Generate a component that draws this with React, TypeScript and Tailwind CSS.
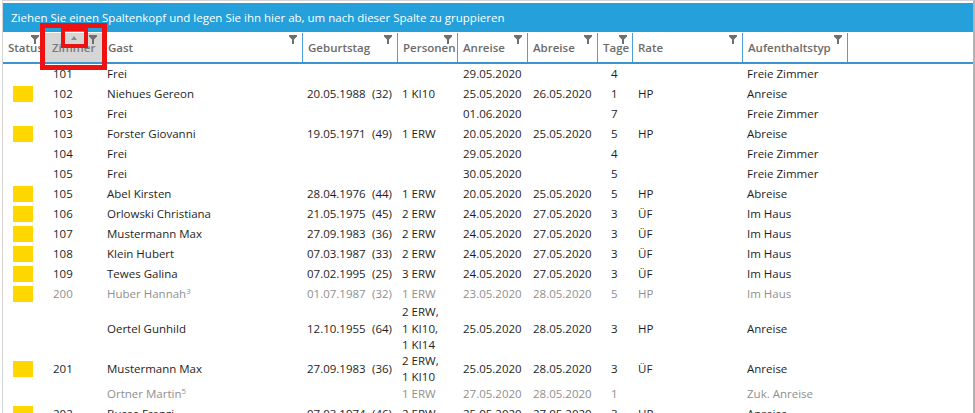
import { ReactNode } from "react";

type Row = {
    h: string;
    sq?: boolean;
    dim?: boolean;
    room?: string;
    name?: string;
    sup?: string;
    birth?: string;
    age?: string;
    pers?: string[];
    an?: string;
    ab?: string;
    tage?: string;
    rate?: string;
    typ?: string;
};

const rows: Row[] = [
    { h: "h-[20px]", room: "101", name: "Frei", an: "29.05.2020", tage: "4", typ: "Freie Zimmer" },
    { h: "h-[20px]", sq: true, room: "102", name: "Niehues Gereon", birth: "20.05.1988", age: "(32)", pers: ["1 KI10"], an: "25.05.2020", ab: "26.05.2020", tage: "1", rate: "HP", typ: "Anreise" },
    { h: "h-[20px]", room: "103", name: "Frei", an: "01.06.2020", tage: "7", typ: "Freie Zimmer" },
    { h: "h-[20px]", sq: true, room: "103", name: "Forster Giovanni", birth: "19.05.1971", age: "(49)", pers: ["1 ERW"], an: "20.05.2020", ab: "25.05.2020", tage: "5", rate: "HP", typ: "Abreise" },
    { h: "h-[20px]", room: "104", name: "Frei", an: "29.05.2020", tage: "4", typ: "Freie Zimmer" },
    { h: "h-[20px]", room: "105", name: "Frei", an: "30.05.2020", tage: "5", typ: "Freie Zimmer" },
    { h: "h-[20px]", sq: true, room: "105", name: "Abel Kirsten", birth: "28.04.1976", age: "(44)", pers: ["1 ERW"], an: "20.05.2020", ab: "25.05.2020", tage: "5", rate: "HP", typ: "Abreise" },
    { h: "h-[20px]", sq: true, room: "106", name: "Orlowski Christiana", birth: "21.05.1975", age: "(45)", pers: ["2 ERW"], an: "24.05.2020", ab: "27.05.2020", tage: "3", rate: "ÜF", typ: "Im Haus" },
    { h: "h-[20px]", sq: true, room: "107", name: "Mustermann Max", birth: "27.09.1983", age: "(36)", pers: ["2 ERW"], an: "24.05.2020", ab: "27.05.2020", tage: "3", rate: "ÜF", typ: "Im Haus" },
    { h: "h-[20px]", sq: true, room: "108", name: "Klein Hubert", birth: "07.03.1987", age: "(33)", pers: ["2 ERW"], an: "24.05.2020", ab: "27.05.2020", tage: "3", rate: "ÜF", typ: "Im Haus" },
    { h: "h-[20px]", sq: true, room: "109", name: "Tewes Galina", birth: "07.02.1995", age: "(25)", pers: ["3 ERW"], an: "24.05.2020", ab: "27.05.2020", tage: "3", rate: "ÜF", typ: "Im Haus" },
    { h: "h-[20px]", sq: true, dim: true, room: "200", name: "Huber Hannah", sup: "3", birth: "01.07.1987", age: "(32)", pers: ["1 ERW"], an: "23.05.2020", ab: "28.05.2020", tage: "5", rate: "HP", typ: "Im Haus" },
    { h: "h-[50px]", name: "Oertel Gunhild", birth: "12.10.1955", age: "(64)", pers: ["2 ERW,", "1 KI10,", "1 KI14"], an: "25.05.2020", ab: "28.05.2020", tage: "3", rate: "HP", typ: "Anreise" },
    { h: "h-[30px]", sq: true, room: "201", name: "Mustermann Max", birth: "27.09.1983", age: "(36)", pers: ["2 ERW,", "1 KI10"], an: "25.05.2020", ab: "28.05.2020", tage: "3", rate: "ÜF", typ: "Anreise" },
    { h: "h-[20px]", dim: true, name: "Ortner Martin", sup: "5", pers: ["1 ERW"], an: "27.05.2020", ab: "28.05.2020", tage: "1", typ: "Zuk. Anreise" },
    { h: "h-[20px]", sq: true, room: "202", name: "Busse Franzi", birth: "07.03.1974", age: "(46)", pers: ["2 ERW"], an: "25.05.2020", ab: "27.05.2020", tage: "3", rate: "HP", typ: "Anreise" },
];

const Funnel = () => (
    <svg width="8" height="9" viewBox="0 0 8 9" className="absolute top-[2px] right-[5px]">
        <path d="M0 0H8V1.5L5 4.5V9H3V4.5L0 1.5Z" fill="#6f6f6f" />
    </svg>
);

const HeadCell = (props: { w: string; children?: ReactNode; sel?: boolean }) => (
    <div
        className={`relative flex items-center h-full border-r border-[#4aa1d9] pl-[5px] ${props.w} ${props.sel ? "bg-[#d6d6d6] pl-[7px] text-[#7a7a7a]" : ""}`}
    >
        {props.children}
        <Funnel />
    </div>
);

export default function App() {
    return (
        <div className="w-[975px] h-[413px] overflow-hidden bg-white pl-[2px]" style={{ fontFamily: '"Open Sans", "Noto Sans", sans-serif' }}>
            <div className="relative h-full border-l border-t border-[#d4d4d4] border-r-2 border-r-[#b3b3b3] pt-[2px]">
                {/* group panel */}
                <div className="h-[29px] bg-[#26a0da] flex items-center pl-[8px] text-white text-[11.5px]">
                    Ziehen Sie einen Spaltenkopf und legen Sie ihn hier ab, um nach dieser Spalte zu gruppieren
                </div>

                {/* header */}
                <div className="flex h-[32px] pt-[1px] border-b-2 border-[#3b93cf] text-[11.5px] font-semibold text-[#6b6b6b]">
                    <HeadCell w="w-[42px]">Status</HeadCell>
                    <HeadCell w="w-[58px]" sel>
                        Zimmer
                        <svg width="6" height="4" viewBox="0 0 6 4" className="absolute top-[3px] left-[26px]">
                            <path d="M3 0L6 4H0Z" fill="#8a8a8a" />
                        </svg>
                    </HeadCell>
                    <HeadCell w="w-[200px]">Gast</HeadCell>
                    <HeadCell w="w-[95px]">Geburtstag</HeadCell>
                    <HeadCell w="w-[60px]">Personen</HeadCell>
                    <HeadCell w="w-[70px]">Anreise</HeadCell>
                    <HeadCell w="w-[70px]">Abreise</HeadCell>
                    <HeadCell w="w-[35px]">Tage</HeadCell>
                    <HeadCell w="w-[110px]">Rate</HeadCell>
                    <HeadCell w="w-[105px]">Aufenthaltstyp</HeadCell>
                </div>

                {/* rows */}
                <div className="text-[11.5px]">
                    {rows.map((r, i) => (
                        <div key={i} className={`flex items-center ${r.h} ${r.dim ? "text-[#8f8f8f]" : "text-[#1e1e1e]"}`}>
                            <div className="w-[42px] pl-[10px]">
                                {r.sq && <div className="w-[20px] h-[16px] bg-[#ffd700]"></div>}
                            </div>
                            <div className="w-[58px] pl-[8px]">{r.room}</div>
                            <div className="w-[200px] pl-[4px]">
                                {r.name}
                                {r.sup && <sup className="text-[8px]">{r.sup}</sup>}
                            </div>
                            <div className="w-[95px] pl-[4px] flex">
                                <span className="w-[65px]">{r.birth}</span>
                                <span>{r.age}</span>
                            </div>
                            <div className="w-[60px] pl-[4px] leading-[16.5px]">
                                {r.pers?.map((p, j) => (
                                    <div key={j}>{p}</div>
                                ))}
                            </div>
                            <div className="w-[70px] pl-[5px]">{r.an}</div>
                            <div className="w-[70px] pl-[5px]">{r.ab}</div>
                            <div className="w-[35px] pl-[13px]">{r.tage}</div>
                            <div className="w-[110px] pl-[5px]">{r.rate}</div>
                            <div className="w-[105px] pl-[4px]">{r.typ}</div>
                        </div>
                    ))}
                </div>

                {/* red highlight marks */}
                <div className="absolute left-[37px] top-[22px] w-[67px] h-[47px] border-[5px] border-[#ee1111]"></div>
                <div className="absolute left-[58px] top-[26px] w-[27px] h-[21px] border-[4px] border-[#ee1111]"></div>
            </div>
        </div>
    );
}
